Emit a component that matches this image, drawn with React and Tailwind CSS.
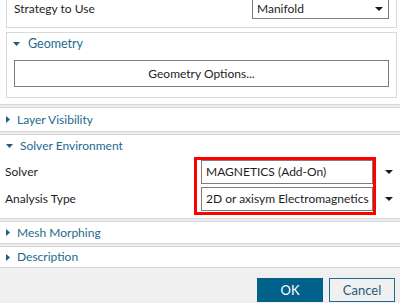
import React from "react";

function TriRight() {
  return (
    <svg width="4" height="7" viewBox="0 0 4 7" className="shrink-0">
      <path d="M0 0 L4 3.5 L0 7 Z" fill="#1d5f80" />
    </svg>
  );
}
function TriDown() {
  return (
    <svg width="7" height="4" viewBox="0 0 7 4" className="shrink-0">
      <path d="M0 0 L7 0 L3.5 4 Z" fill="#1d5f80" />
    </svg>
  );
}
function Caret() {
  return (
    <svg width="8" height="4" viewBox="0 0 8 4" className="shrink-0">
      <path d="M0 0 L8 0 L4 4 Z" fill="#1a1a1a" />
    </svg>
  );
}

function Band() {
  return <div className="h-[4px] w-full border-y border-[#d6d6d6] bg-[#eeeeee]" />;
}

function Header({ open, label, h }) {
  return (
    <div className={`flex items-center pl-[6px] gap-[7px] ${h}`}>
      {open ? <TriDown /> : <TriRight />}
      <span className="text-[#1c6a8e]">{label}</span>
    </div>
  );
}

export default function App() {
  return (
    <div
      className="relative w-[400px] h-[303px] overflow-hidden bg-white text-[12px] text-[#1e1e1e] leading-none"
      style={{ fontFamily: "Lato, 'Open Sans', sans-serif" }}
    >
      <div className="flex flex-col h-[268px] border-b border-[#d9d9d9]">
        {/* Strategy box */}
        <div className="ml-[6px] w-[391px] border-x border-b border-[#d9d9d9] pb-[8px]">
          <div className="-mt-[5px] flex items-center justify-between pl-[7px] pr-[7px] h-[24px]">
            <span className="pt-[3px]">Strategy to Use</span>
            <div className="w-[137px] h-[24px] border border-[#7d7d7d] flex items-center justify-between pl-[4px] pr-[5px]">
              <span className="pt-[4px]">Manifold</span>
              <span className="pt-[4px]"><Caret /></span>
            </div>
          </div>
        </div>

        {/* Geometry box */}
        <div className="mt-[4px] ml-[6px] w-[391px] h-[66px] border border-[#d9d9d9] flex flex-col">
          <div className="flex items-center h-[22px] pl-[6px] gap-[8px]">
            <TriDown />
            <span className="text-[#1c6a8e] text-[12.5px]">Geometry</span>
          </div>
          <div className="mt-[5px] ml-[7px] w-[375px] h-[27px] border border-[#7d7d7d] flex items-center justify-center">
            Geometry Options...
          </div>
        </div>

        <div className="h-[6px]" />
        <Band />
        <Header label="Layer Visibility" h="h-[23px]" />
        <Band />
        <Header open label="Solver Environment" h="h-[21px]" />

        {/* Solver rows */}
        <div className="mt-[4px] flex flex-col gap-[3px]">
          <div className="flex items-center h-[24px]">
            <span className="w-[201px] pl-[5px]">Solver</span>
            <div className="w-[172px] h-[24px] border border-[#7d7d7d] flex items-center pl-[4px]">
              MAGNETICS (Add-On)
            </div>
            <div className="flex-1 flex justify-center pl-[5px]"><Caret /></div>
          </div>
          <div className="flex items-center h-[24px]">
            <span className="w-[201px] pl-[5px]">Analysis Type</span>
            <div className="w-[172px] h-[24px] border border-[#7d7d7d] flex items-center pl-[4px]">
              2D or axisym Electromagnetics
            </div>
            <div className="flex-1 flex justify-center pl-[5px]"><Caret /></div>
          </div>
        </div>

        <div className="h-[7px]" />
        <Band />
        <Header label="Mesh Morphing" h="h-[21px]" />
        <Band />
        <Header label="Description" h="h-[20px]" />
      </div>

      {/* footer */}
      <div className="h-[35px] bg-[#f0f0f0] flex justify-end items-start pt-[10px] pr-[5px] gap-[6px]">
        <div className="w-[66px] h-[24px] bg-[#00628b] text-white flex items-center justify-center text-[13px]">OK</div>
        <div className="w-[66px] h-[24px] border border-[#1f6c91] text-[#1d5b7a] flex items-center justify-center text-[13px]">Cancel</div>
      </div>

      {/* red annotation */}
      <div className="absolute left-[194px] top-[157px] w-[182px] h-[58px] border-[3px] border-[#ff0000]" />
    </div>
  );
}
